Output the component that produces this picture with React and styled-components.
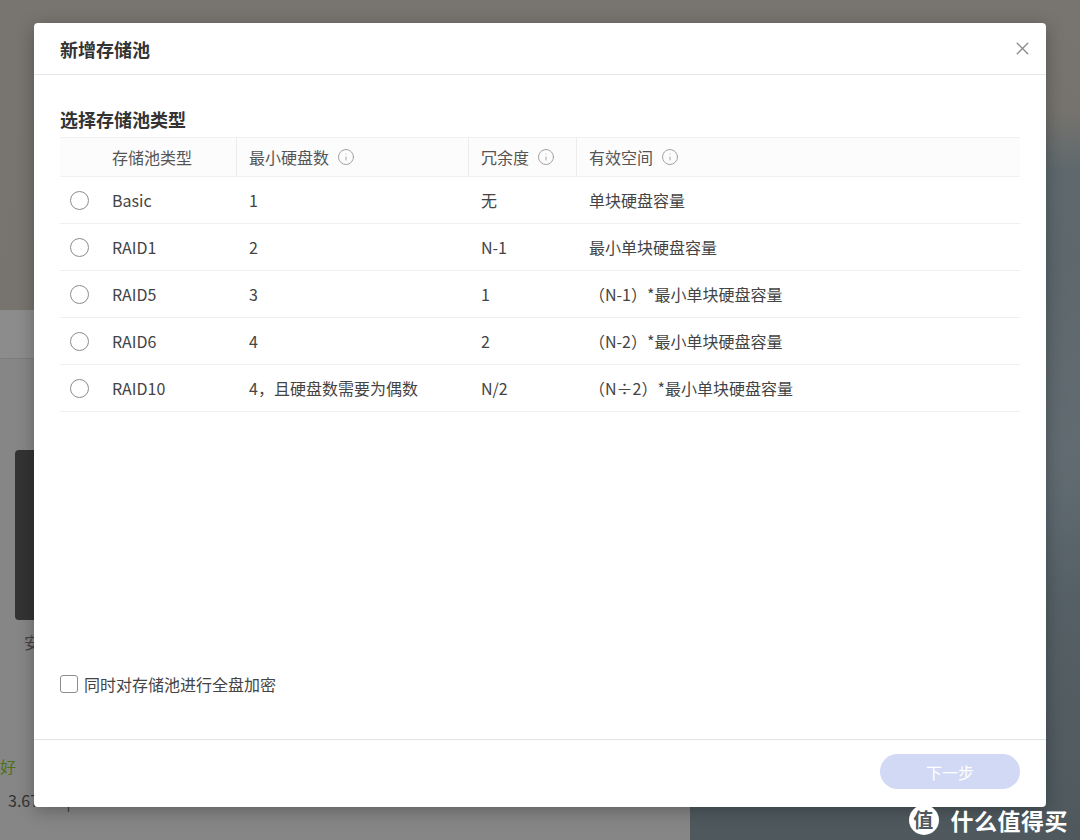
import React from "react";
import styled, { createGlobalStyle } from "styled-components";
import { X, Info } from "lucide-react";

const Global = createGlobalStyle`
  html, body { margin: 0; padding: 0; }
  body {
    width: 1080px; height: 840px; overflow: hidden;
    font-family: "Noto Sans CJK SC", "Noto Sans", sans-serif;
  }
  * { box-sizing: border-box; }
`;

const Page = styled.div`
  position: relative;
  width: 1080px;
  height: 840px;
  overflow: hidden;
  display: flex;
  background: linear-gradient(180deg, #787570 0px, #76736e 110px, #5f696d 170px, #58636a 500px, #4f595d 840px);
`;

const AppColumn = styled.div`
  width: 690px;
  display: flex;
  flex-direction: column;
`;

const TopArea = styled.div`
  height: 310px;
  flex: none;
  background: linear-gradient(180deg, #787570 0%, #77746f 100%);
`;

const AppWindow = styled.div`
  flex: 1;
  background: #868686;
  display: flex;
  flex-direction: column;
`;

const AppStrip = styled.div`
  height: 49px;
  background: #8c8c8c;
  border-bottom: 1px solid #7c7c7c;
`;

const AppBody = styled.div`
  padding: 91px 0 0 15px;
  display: flex;
  flex-direction: column;
  color: #3a3a3a;
  font-size: 16px;
`;

const DarkCard = styled.div`
  width: 60px;
  height: 170px;
  border-radius: 4px;
  background: #333333;
`;

const CardLabel = styled.div`
  margin: 11px 0 0 9px;
  line-height: 22px;
  color: #444;
`;

const StatusGood = styled.div`
  margin: 102px 0 0 -15px;
  line-height: 22px;
  color: #4c7219;
`;

const Capacity = styled.div`
  margin: 12px 0 0 -7px;
  line-height: 22px;
  color: #333;
`;

const Wallpaper = styled.div`
  flex: 1;
  background: linear-gradient(160deg, rgba(255,255,255,0) 40%, rgba(255,255,255,0.05) 60%, rgba(255,255,255,0) 75%);
`;

const Modal = styled.div`
  position: absolute;
  left: 34px;
  top: 23px;
  width: 1012px;
  height: 784px;
  background: #fff;
  border-radius: 4px;
  box-shadow: 0 4px 18px rgba(0, 0, 0, 0.28);
  display: flex;
  flex-direction: column;
`;

const ModalHeader = styled.div`
  height: 52px;
  flex: none;
  display: flex;
  align-items: center;
  justify-content: space-between;
  padding: 0 12px 0 26px;
  border-bottom: 1px solid #e6e6e6;
`;

const Title = styled.div`
  font-size: 18px;
  font-weight: 700;
  color: #333;
  line-height: 24px;
`;

const CloseBtn = styled.button`
  border: 0;
  background: none;
  padding: 0;
  width: 24px;
  height: 24px;
  display: flex;
  align-items: center;
  justify-content: center;
  color: #8a8a8a;
  cursor: pointer;
`;

const ModalBody = styled.div`
  flex: 1;
  display: flex;
  flex-direction: column;
  padding: 32px 26px 44px 26px;
`;

const SectionTitle = styled.div`
  font-size: 18px;
  font-weight: 700;
  color: #333;
  line-height: 24px;
  margin-bottom: 6px;
`;

const Grid = styled.div`
  display: grid;
  grid-template-columns: 40px 137px 232px 108px 1fr;
  width: 960px;
`;

const HeadCell = styled.div`
  height: 40px;
  display: flex;
  align-items: center;
  gap: 8px;
  padding-left: 12px;
  background: #fcfcfc;
  border-top: 1px solid #f0f0f0;
  border-bottom: 1px solid #f2f2f2;
  border-right: ${(p) => (p.$sep ? "1px solid #ececec" : "0")};
  font-size: 16px;
  color: #555;
  line-height: 22px;
`;

const Cell = styled.div`
  height: 47px;
  display: flex;
  align-items: center;
  padding-left: ${(p) => (p.$flush ? "10px" : "12px")};
  border-bottom: 1px solid #efefef;
  font-size: 16px;
  color: #444;
  line-height: 22px;
  white-space: nowrap;
`;

const Radio = styled.span`
  width: 19px;
  height: 19px;
  border-radius: 50%;
  border: 1px solid #8c8c8c;
  background: #fff;
  display: inline-block;
`;

const InfoIcon = styled(Info)`
  color: #9a9a9a;
  flex: none;
`;

const CheckRow = styled.label`
  margin-top: auto;
  display: flex;
  align-items: center;
  gap: 6px;
  font-size: 16px;
  color: #444;
  line-height: 22px;
`;

const CheckBox = styled.span`
  width: 18px;
  height: 18px;
  border: 1px solid #8c8c8c;
  border-radius: 3px;
  background: #fff;
  display: inline-block;
`;

const ModalFooter = styled.div`
  height: 68px;
  flex: none;
  border-top: 1px solid #e3e3e3;
  display: flex;
  align-items: center;
  justify-content: flex-end;
  padding: 0 26px 4px 0;
`;

const NextButton = styled.button`
  width: 140px;
  height: 35px;
  border: 0;
  border-radius: 18px;
  background: #d2d9f5;
  color: #fff;
  font-family: inherit;
  font-size: 16px;
  line-height: 22px;
`;

const Watermark = styled.div`
  position: absolute;
  right: 12px;
  bottom: 5px;
  display: flex;
  align-items: center;
  gap: 12px;
  color: #fff;
  font-size: 23px;
  font-weight: 700;
  line-height: 30px;
  letter-spacing: 0.5px;
`;

const Logo = styled.span`
  width: 30px;
  height: 30px;
  border-radius: 50%;
  background: #fff;
  color: #4f595d;
  font-size: 20px;
  display: flex;
  align-items: center;
  justify-content: center;
`;

const rows = [
  ["Basic", "1", "无", "单块硬盘容量"],
  ["RAID1", "2", "N-1", "最小单块硬盘容量"],
  ["RAID5", "3", "1", "（N-1）*最小单块硬盘容量"],
  ["RAID6", "4", "2", "（N-2）*最小单块硬盘容量"],
  ["RAID10", "4，且硬盘数需要为偶数", "N/2", "（N÷2）*最小单块硬盘容量"],
];

export default function App() {
  return (
    <>
      <Global />
      <Page>
        <AppColumn>
          <TopArea />
          <AppWindow>
            <AppStrip />
            <AppBody>
              <DarkCard />
              <CardLabel>安全</CardLabel>
              <StatusGood>好</StatusGood>
              <Capacity>3.67 TB | 2.33 TB</Capacity>
            </AppBody>
          </AppWindow>
        </AppColumn>
        <Wallpaper />

        <Modal>
          <ModalHeader>
            <Title>新增存储池</Title>
            <CloseBtn aria-label="关闭">
              <X size={21} strokeWidth={1.6} />
            </CloseBtn>
          </ModalHeader>
          <ModalBody>
            <SectionTitle>选择存储池类型</SectionTitle>
            <Grid>
              <HeadCell />
              <HeadCell $sep>存储池类型</HeadCell>
              <HeadCell $sep>
                最小硬盘数 <InfoIcon size={18} strokeWidth={1.2} />
              </HeadCell>
              <HeadCell $sep>
                冗余度 <InfoIcon size={18} strokeWidth={1.2} />
              </HeadCell>
              <HeadCell>
                有效空间 <InfoIcon size={18} strokeWidth={1.2} />
              </HeadCell>
              {rows.map((r) => (
                <React.Fragment key={r[0]}>
                  <Cell $flush>
                    <Radio />
                  </Cell>
                  <Cell>{r[0]}</Cell>
                  <Cell>{r[1]}</Cell>
                  <Cell>{r[2]}</Cell>
                  <Cell>{r[3]}</Cell>
                </React.Fragment>
              ))}
            </Grid>
            <CheckRow>
              <CheckBox />
              同时对存储池进行全盘加密
            </CheckRow>
          </ModalBody>
          <ModalFooter>
            <NextButton disabled>下一步</NextButton>
          </ModalFooter>
        </Modal>

        <Watermark>
          <Logo>值</Logo>
          什么值得买
        </Watermark>
      </Page>
    </>
  );
}
